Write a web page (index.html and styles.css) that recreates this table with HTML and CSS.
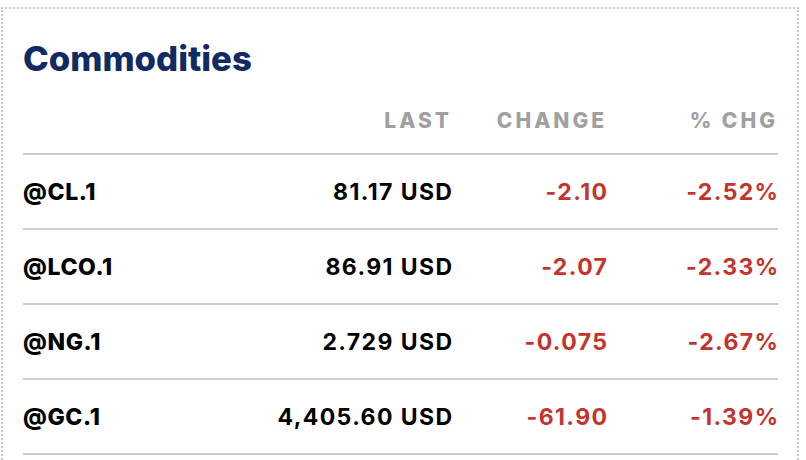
FILE: index.html
```html
<!DOCTYPE html>
<html lang="en">
<head>
<meta charset="utf-8">
<title>Commodities</title>
<link rel="stylesheet" href="styles.css">
</head>
<body>
<section class="card">
  <h2 class="title">Commodities</h2>
  <div class="table">
    <div class="row head">
      <span class="cell name"></span>
      <span class="cell num">LAST</span>
      <span class="cell num">CHANGE</span>
      <span class="cell num">% CHG</span>
    </div>
    <div class="row">
      <span class="cell name">@CL.1</span>
      <span class="cell num">81.17 USD</span>
      <span class="cell num neg">-2.10</span>
      <span class="cell num neg">-2.52%</span>
    </div>
    <div class="row">
      <span class="cell name">@LCO.1</span>
      <span class="cell num">86.91 USD</span>
      <span class="cell num neg">-2.07</span>
      <span class="cell num neg">-2.33%</span>
    </div>
    <div class="row">
      <span class="cell name">@NG.1</span>
      <span class="cell num">2.729 USD</span>
      <span class="cell num neg">-0.075</span>
      <span class="cell num neg">-2.67%</span>
    </div>
    <div class="row">
      <span class="cell name">@GC.1</span>
      <span class="cell num">4,405.60 USD</span>
      <span class="cell num neg">-61.90</span>
      <span class="cell num neg">-1.39%</span>
    </div>
  </div>
</section>
</body>
</html>
```
FILE: styles.css
```css
html, body {
  margin: 0;
  padding: 0;
  background: #ffffff;
}
body {
  padding: 7px 0 0 1px;
  font-family: Inter, "Noto Sans", sans-serif;
}
.card {
  width: 798px;
  box-sizing: border-box;
  height: 480px;
  border: 2px dotted #c3c8d3;
  padding: 29px 19px 0 20px;
}
.title {
  margin: 0;
  font-size: 34.7px;
  line-height: 40px;
  font-weight: 800;
  color: #102a63;
}
.table {
  margin-top: 30px;
}
.row {
  display: grid;
  grid-template-columns: 1fr 200px 155px 171px;
  align-items: center;
  height: 73px;
  border-bottom: 2px solid #cccccc;
  font-size: 23px;
  font-weight: 700;
  color: #000000;
  letter-spacing: 1.4px;
}
.row.head {
  height: 45px;
  align-items: start;
  font-size: 21px;
  font-weight: 800;
  color: #a0a0a0;
  letter-spacing: 3px;
}
.cell.name {
  font-weight: 800;
  letter-spacing: 0.6px;
}
.cell.num {
  text-align: right;
  margin-right: -1.4px;
}
.head .cell.num {
  margin-right: 0;
}
.neg {
  color: #c4332d;
}
```
